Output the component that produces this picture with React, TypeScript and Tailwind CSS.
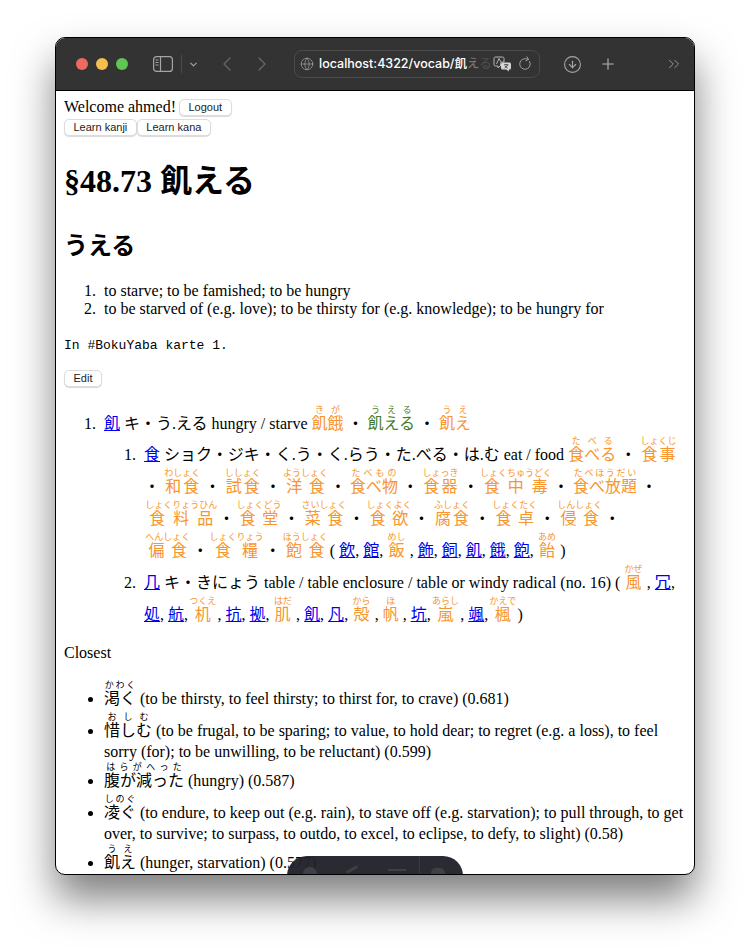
import { ChevronDown, ChevronLeft, ChevronRight, ChevronsRight, CircleArrowDown, Globe, Plus, RotateCw } from 'lucide-react';

const serif = "font-['Liberation_Serif','Noto_Sans_CJK_JP',serif]";

function Ruby({ base, top, color = 'text-[#f7952f]' }: { base: string; top: string; color?: string }) {
  // furigana wider than its kanji takes a little extra room on both sides
  const wide = top.length * 9 > base.length * 16;
  return (
    <span className={wide ? 'mx-[1.25px]' : ''}>
      <ruby className={color}>
        {base}
        <rt className="text-[9px] leading-[14px]">{top}</rt>
      </ruby>
    </span>
  );
}

function Kanji({ children }: { children: string }) {
  return <a href="#" className="text-[#0000ee] underline">{children}</a>;
}

function Btn({ children }: { children: string }) {
  return (
    <button className="h-[17px] px-[8.5px] bg-white border border-[#dcdcdc] rounded-[5px] shadow-[0_1px_1px_rgba(0,0,0,0.15)] text-[11px] leading-[15px] text-[#222222] font-['Liberation_Sans',sans-serif] align-top">
      {children}
    </button>
  );
}

export default function App() {
  return (
    <div className="h-[948px] w-[750px] bg-white pt-[37px] flex flex-col items-center overflow-hidden">
      <div className="relative w-[640px] h-[838px] rounded-[10px] overflow-hidden border border-black bg-white shadow-[0_24px_40px_rgba(0,0,0,0.5)] flex flex-col">
        <header className="h-[53px] shrink-0 bg-[#333333] border-b border-black flex items-center pl-[20px] text-[#8e8e8e]">
          <span className="w-3 h-3 rounded-full bg-[#ec6a5e]" />
          <span className="w-3 h-3 rounded-full bg-[#f4bf4f] ml-2" />
          <span className="w-3 h-3 rounded-full bg-[#61c554] ml-2" />
          <svg width="20" height="16" viewBox="0 0 20 16" fill="none" stroke="#a5a5a5" strokeWidth="1.2" className="ml-[25px]">
            <rect x="0.6" y="0.6" width="18.8" height="14.8" rx="3" />
            <path d="M7.5 1v14" />
            <path d="M2.5 4h3M2.5 6.5h3M2.5 9h3" />
          </svg>
          <div className="w-px h-[18px] bg-[#4a4a4a] ml-[8px]" />
          <ChevronDown size={11} strokeWidth={2.5} className="ml-[6px] text-[#a5a5a5]" />
          <ChevronLeft size={24} strokeWidth={1.4} className="ml-[16px] text-[#666666]" />
          <ChevronRight size={24} strokeWidth={1.4} className="ml-[11px] text-[#666666]" />
          <div className="ml-[20px] w-[246px] h-[28px] rounded-[8px] border border-[#4a4a4a] flex items-center pl-[5px] pr-[4px]">
            <Globe size={14} strokeWidth={1.2} className="text-[#a5a5a5] shrink-0" />
            <span className="ml-[5px] w-[172px] overflow-hidden whitespace-nowrap text-[12.5px] font-medium text-white font-['Inter','Noto_Sans_CJK_JP',sans-serif]">
              localhost:4322/vocab/飢<span className="text-[#777777]">え</span><span className="text-[#4a4a4a]">る</span>
            </span>
            <svg width="19" height="16" viewBox="0 0 19 16" fill="none" className="ml-[2px] shrink-0">
              <path d="M2.500 1h7A1.500 1.500 0 0 1 11 2.500V6H9a1.500 1.500 0 0 0-1.500 1.500V10H7l-2 2v-2H2.500A1.500 1.500 0 0 1 1 8.500v-6A1.500 1.500 0 0 1 2.500 1z" stroke="#b5b5b5" />
              <path d="M3.500 8l2.500-5.500L8 6" stroke="#b5b5b5" />
              <path d="M9.500 6.500h7A1.500 1.500 0 0 1 18 8v4a1.500 1.500 0 0 1-1.500 1.500H16l-.5 2-2-2h-4A1.500 1.500 0 0 1 8 12V8a1.500 1.500 0 0 1 1.500-1.500z" fill="#d5d5d5" />
              <path d="M11 8.800h4.500M13.200 8v1M11.500 12.300l3.300-3.300M12 10l2.800 2.300" stroke="#333333" strokeWidth="0.8" />
            </svg>
            <RotateCw size={14} strokeWidth={1.5} className="ml-[6px] text-[#a5a5a5] shrink-0 -rotate-[30deg]" />
          </div>
          <CircleArrowDown size={19} strokeWidth={1.4} className="ml-[23px] text-[#a5a5a5]" />
          <Plus size={18} strokeWidth={1.5} className="ml-[17px] text-[#b5b5b5]" />
          <ChevronsRight size={18} strokeWidth={1.2} className="ml-[48px] text-[#a0a0a0]" />
        </header>

        <main className={`flex-1 overflow-hidden px-2 text-[16px] leading-[18px] text-black ${serif}`}>
          <div className="mt-[7px] h-[21px] flex items-start">
            <span>Welcome ahmed!</span>
            <span className="ml-[3px] mt-[1px]"><Btn>Logout</Btn></span>
          </div>
          <div className="flex">
            <Btn>Learn kanji</Btn>
            <Btn>Learn kana</Btn>
          </div>

          <h1 className="mt-[27px] text-[32px] leading-[37px] font-bold">§48.73 飢える</h1>
          <h2 className="mt-[32px] text-[24px] leading-[28px] font-bold">うえる</h2>
          <ol className="mt-[22px] pl-10 list-decimal marker:[content:counter(list-item)'.\00a0\00a0']">
            <li>to starve; to be famished; to be hungry</li>
            <li>to be starved of (e.g. love); to be thirsty for (e.g. knowledge); to be hungry for</li>
          </ol>
          <pre className="mt-[20px] text-[13px] leading-[15px] font-['Liberation_Mono',monospace]">In #BokuYaba karte 1.</pre>
          <div className="mt-[17px] h-[18px]"><Btn>Edit</Btn></div>

          <ol className="mt-[17px] pl-10 list-decimal leading-[32px] marker:[content:counter(list-item)'.\00a0\00a0']">
            <li>
              <Kanji>飢</Kanji> キ・う.える hungry / starve <Ruby base="飢餓" top="きが" /> ・ <Ruby base="飢える" top="うえる" color="text-[#3f7d2b]" /> ・ <Ruby base="飢え" top="うえ" />
              <ol className="-mt-[4px] pl-10 list-decimal">
                <li>
                  <Kanji>食</Kanji> ショク・ジキ・く.う・く.らう・た.べる・は.む eat / food <Ruby base="食べる" top="たべる" /> ・ <Ruby base="食事" top="しょくじ" /> ・ <Ruby base="和食" top="わしょく" /> ・ <Ruby base="試食" top="ししょく" /> ・ <Ruby base="洋食" top="ようしょく" /> ・ <Ruby base="食べ物" top="たべもの" /> ・ <Ruby base="食器" top="しょっき" /> ・ <Ruby base="食中毒" top="しょくちゅうどく" /> ・ <Ruby base="食べ放題" top="たべほうだい" /> ・<br /><Ruby base="食料品" top="しょくりょうひん" /> ・ <Ruby base="食堂" top="しょくどう" /> ・ <Ruby base="菜食" top="さいしょく" /> ・ <Ruby base="食欲" top="しょくよく" /> ・ <Ruby base="腐食" top="ふしょく" /> ・ <Ruby base="食卓" top="しょくたく" /> ・ <Ruby base="侵食" top="しんしょく" /> ・<br /><Ruby base="偏食" top="へんしょく" /> ・ <Ruby base="食糧" top="しょくりょう" /> ・ <Ruby base="飽食" top="ほうしょく" /> ( <Kanji>飲</Kanji>, <Kanji>館</Kanji>, <Ruby base="飯" top="めし" /> , <Kanji>飾</Kanji>, <Kanji>飼</Kanji>, <Kanji>飢</Kanji>, <Kanji>餓</Kanji>, <Kanji>飽</Kanji>, <Ruby base="飴" top="あめ" /> )
                </li>
                <li className="-mt-[3px]">
                  <Kanji>几</Kanji> キ・きにょう table / table enclosure / table or windy radical (no. 16) ( <Ruby base="風" top="かぜ" /> , <Kanji>冗</Kanji>,<br /><Kanji>処</Kanji>, <Kanji>航</Kanji>, <Ruby base="机" top="つくえ" /> , <Kanji>抗</Kanji>, <Kanji>拠</Kanji>, <Ruby base="肌" top="はだ" /> , <Kanji>飢</Kanji>, <Kanji>凡</Kanji>, <Ruby base="殻" top="から" /> , <Ruby base="帆" top="ほ" /> , <Kanji>坑</Kanji>, <Ruby base="嵐" top="あらし" /> , <Kanji>颯</Kanji>, <Ruby base="楓" top="かえで" /> )
                </li>
              </ol>
            </li>
          </ol>

          <p className="mt-[13px]">Closest</p>
          <ul className="mt-[15px] pl-10 list-disc leading-[21px]">
            <li className="pt-[11px]"><Ruby base="渇く" top="かわく" color="text-black" /> (to be thirsty, to feel thirsty; to thirst for, to crave) (0.681)</li>
            <li className="pt-[11px]"><Ruby base="惜しむ" top="おしむ" color="text-black" /> (to be frugal, to be sparing; to value, to hold dear; to regret (e.g. a loss), to feel sorry (for); to be unwilling, to be reluctant) (0.599)</li>
            <li className="pt-[7px]"><Ruby base="腹が減った" top="はらがへった" color="text-black" /> (hungry) (0.587)</li>
            <li className="pt-[11px]"><Ruby base="凌ぐ" top="しのぐ" color="text-black" /> (to endure, to keep out (e.g. rain), to stave off (e.g. starvation); to pull through, to get over, to survive; to surpass, to outdo, to excel, to eclipse, to defy, to slight) (0.58)</li>
            <li className="pt-[7px]"><Ruby base="飢え" top="うえ" color="text-black" /> (hunger, starvation) (0.577)</li>
          </ul>
        </main>

        <div className="absolute left-[231px] top-[818px] w-[176px] h-[40px] rounded-t-[20px] bg-[#1f2027]/95 flex items-start">
          <span className="ml-[16px] mt-[11px] w-[14px] h-[14px] rounded-t-full bg-[#3f4047]" />
          <span className="ml-[29px] mt-[12px] w-[12px] h-[3px] rotate-[-30deg] bg-[#3f4047]" />
          <span className="ml-[30px] mt-[13px] w-[18px] h-[2px] bg-[#3f4047]" />
          <span className="ml-[13px] w-px h-full bg-[#3a3b42]" />
          <span className="ml-[11px] mt-[12px] w-[14px] h-[8px] rounded-t-[5px] bg-[#3f4047]" />
        </div>
      </div>
    </div>
  );
}
